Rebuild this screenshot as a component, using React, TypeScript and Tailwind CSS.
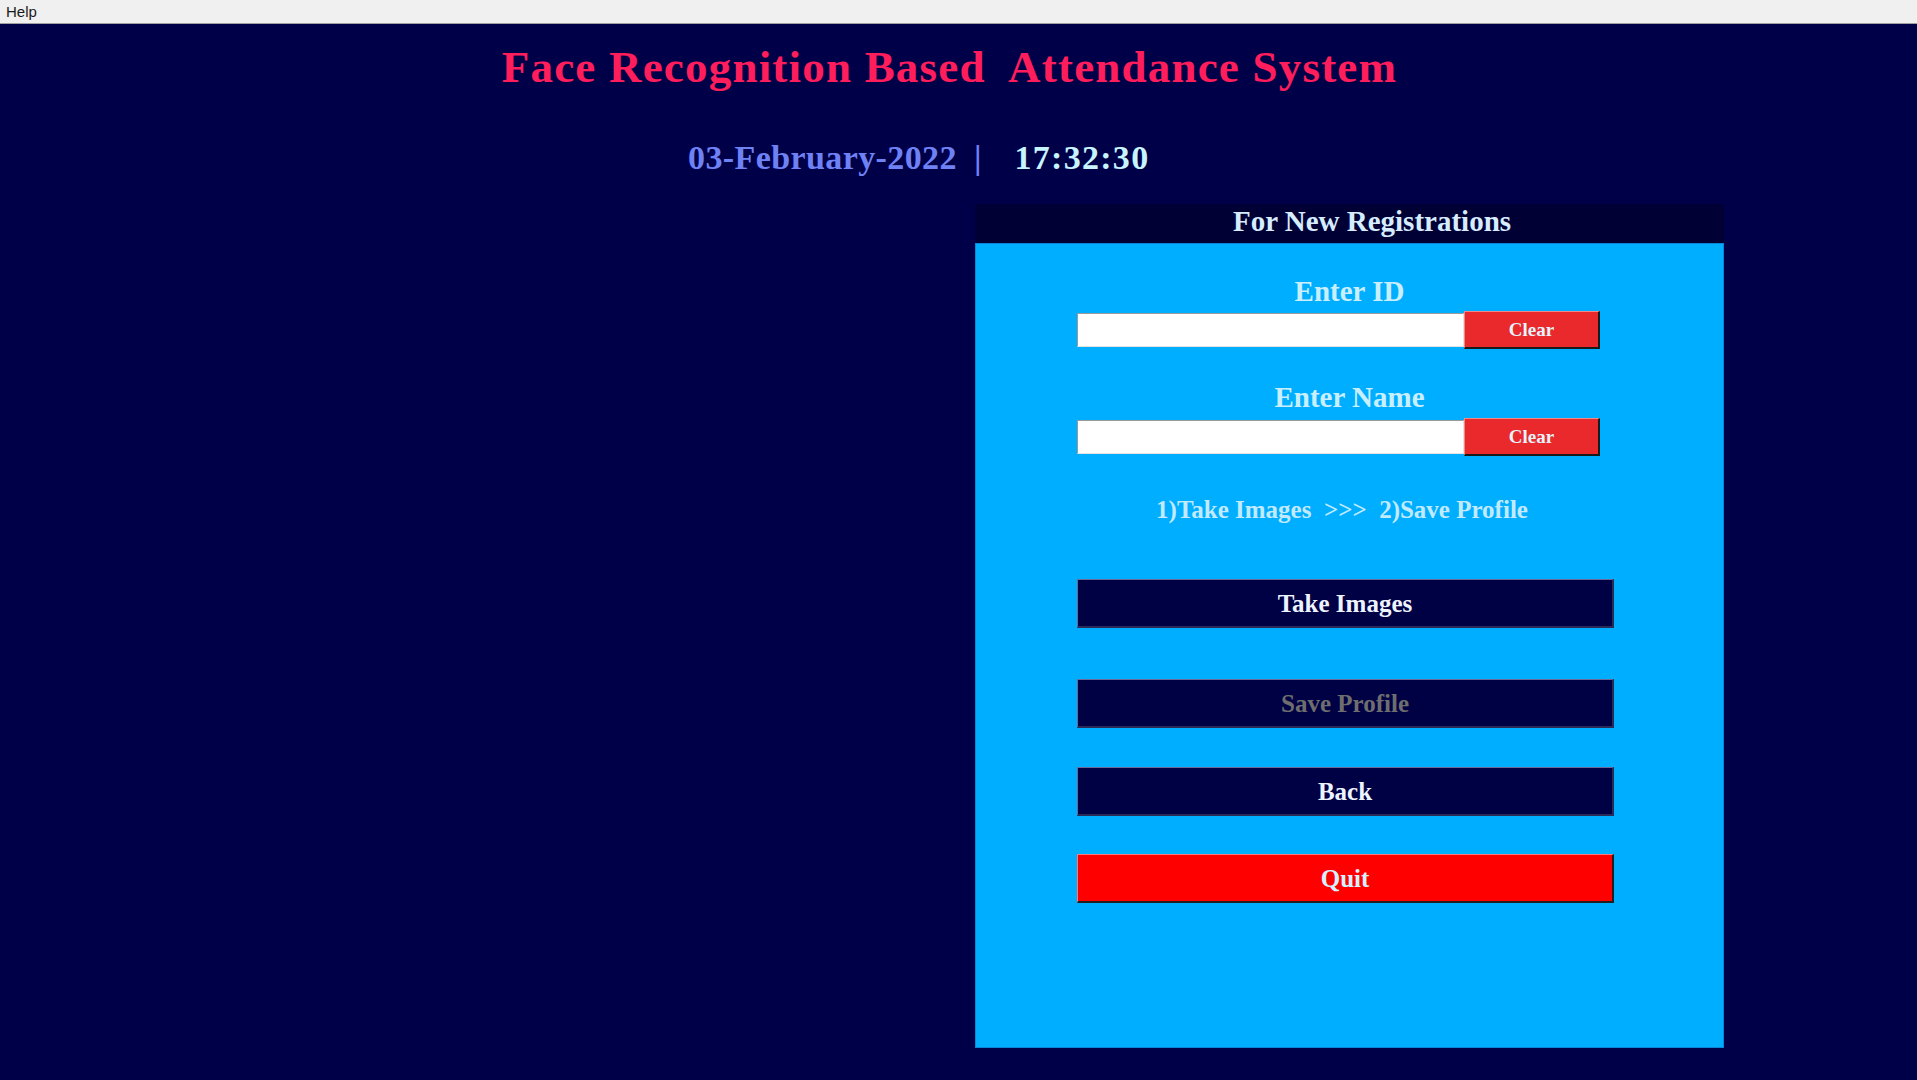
import React from 'react';

const serif = "font-['Liberation_Serif','Times_New_Roman',serif] font-bold";

const NavyButton: React.FC<{ label: string; disabled?: boolean; className?: string }> = ({ label, disabled, className }) => (
  <div
    className={`ml-[101px] flex h-[49px] w-[537px] items-center justify-center border-t border-l border-r-2 border-b-2 border-t-[#6a6a9a] border-l-[#6a6a9a] border-r-[#2b2b5a] border-b-[#2b2b5a] bg-[#000045] ${className ?? ''}`}
  >
    <span className={`${serif} text-[25px] leading-none ${disabled ? 'text-[#6e6e6e]' : 'text-[#eef4ff]'}`}>{label}</span>
  </div>
);

const EntryRow: React.FC<{ className?: string }> = ({ className }) => (
  <div className={`ml-[101px] flex items-center ${className ?? ''}`}>
    <div className="h-[34px] w-[387px] border-t border-l border-b border-r border-t-[#9a9a9a] border-l-[#9a9a9a] border-b-[#e3e3e3] border-r-[#e3e3e3] bg-white" />
    <div className="flex h-[38px] w-[136px] items-center justify-center border-t border-l border-r-2 border-b-2 border-t-[#f08a8a] border-l-[#f08a8a] border-r-[#1a1a1a] border-b-[#1a1a1a] bg-[#e9292c]">
      <span className={`${serif} text-[19px] leading-none text-[#e4f2fb]`}>Clear</span>
    </div>
  </div>
);

export default function App() {
  return (
    <div className="min-h-screen w-full bg-[#000048]">
      {/* menu bar */}
      <div className="h-[24px] border-b border-[#a0a0a0] bg-[#f0f0f0] pl-[6px] pt-[4px] font-['Liberation_Sans',Arial,sans-serif] text-[15px] leading-none text-[#1a1a1a]">
        Help
      </div>

      <h1 className={`${serif} mt-[21px] pr-[18px] text-center text-[45px] leading-none tracking-[1.2px] text-[#ff1d5c] whitespace-pre`}>
        Face Recognition Based  Attendance System
      </h1>

      <div className={`${serif} mt-[51px] flex items-baseline pl-[688px] text-[34px] leading-none`}>
        <span className="tracking-[0.4px] text-[#6f82f5]">03-February-2022</span>
        <span className="ml-[17px] text-[#6f82f5]">|</span>
        <span className="ml-[33px] tracking-[1.3px] text-[#c8f4ff]">17:32:30</span>
      </div>

      <div className="mt-[29px] pl-[975px]">
        <div className="w-[749px]">
          <div className={`${serif} h-[39px] bg-[#000035] pl-[45px] pt-[3px] text-center text-[29px] leading-none text-[#d6ecff]`}>
            For New Registrations
          </div>
          <div className="flex h-[805px] flex-col border border-[#0a86d8] bg-[#00aeff]">
            <div className={`${serif} mt-[33px] text-center text-[29px] leading-none text-[#c9efff]`}>Enter ID</div>
            <EntryRow className="mt-[5px]" />
            <div className={`${serif} mt-[34px] text-center text-[29px] leading-none text-[#c9efff]`}>Enter Name</div>
            <EntryRow className="mt-[6px]" />
            <div className={`${serif} mt-[41px] pr-[15px] text-center text-[25px] leading-none text-[#c2eaff] whitespace-pre`}>
              1)Take Images  &gt;&gt;&gt;  2)Save Profile
            </div>
            <NavyButton label="Take Images" className="mt-[57px]" />
            <NavyButton label="Save Profile" disabled className="mt-[51px]" />
            <NavyButton label="Back" className="mt-[39px]" />
            <div className="ml-[101px] mt-[38px] flex h-[49px] w-[537px] items-center justify-center border-t border-l border-r-2 border-b-2 border-t-[#ff7a7a] border-l-[#ff7a7a] border-r-[#202020] border-b-[#202020] bg-[#ff0000]">
              <span className={`${serif} text-[25px] leading-none text-[#d2f2ff]`}>Quit</span>
            </div>
          </div>
        </div>
      </div>
    </div>
  );
}
